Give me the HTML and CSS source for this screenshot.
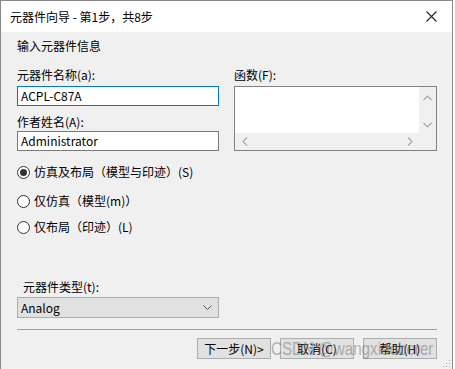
FILE: index.html
```html
<!DOCTYPE html>
<html lang="zh-CN">
<head>
<meta charset="UTF-8">
<title>元器件向导</title>
<link rel="stylesheet" href="styles.css">
</head>
<body>
<div class="window">
    <div class="titlebar">
        <span class="title">元器件向导 - 第1步，共8步</span>
        <svg class="close" width="11" height="11" viewBox="0 0 11 11">
            <path d="M0.5 0.5 L10.5 10.5 M10.5 0.5 L0.5 10.5" stroke="#222" stroke-width="1.1" fill="none"/>
        </svg>
    </div>
    <div class="content">
        <div class="heading">输入元器件信息</div>

        <div class="fields">
            <div class="col">
                <label class="lbl">元器件名称(a):</label>
                <div class="input focused">ACPL-C87A</div>
                <label class="lbl second">作者姓名(A):</label>
                <div class="input">Administrator</div>
            </div>
            <div class="col">
                <label class="lbl">函数(F):</label>
                <div class="listbox">
                    <div class="list-main">
                        <div class="list-white"></div>
                        <div class="vscroll">
                            <svg width="9" height="6" viewBox="0 0 9 6"><path d="M0.5 5 L4.5 1 L8.5 5" stroke="#a6a6a6" stroke-width="1.2" fill="none"/></svg>
                            <svg width="9" height="6" viewBox="0 0 9 6"><path d="M0.5 1 L4.5 5 L8.5 1" stroke="#a6a6a6" stroke-width="1.2" fill="none"/></svg>
                        </div>
                    </div>
                    <div class="hscroll">
                        <svg width="6" height="9" viewBox="0 0 6 9"><path d="M5 0.5 L1 4.5 L5 8.5" stroke="#a6a6a6" stroke-width="1.2" fill="none"/></svg>
                        <svg width="6" height="9" viewBox="0 0 6 9"><path d="M1 0.5 L5 4.5 L1 8.5" stroke="#a6a6a6" stroke-width="1.2" fill="none"/></svg>
                        <span class="corner"></span>
                    </div>
                </div>
            </div>
        </div>

        <div class="radios">
            <div class="radio-row"><span class="radio checked"></span>仿真及布局（模型与印迹）(S)</div>
            <div class="radio-row r2"><span class="radio"></span>仅仿真（模型(m)）</div>
            <div class="radio-row r3"><span class="radio"></span>仅布局（印迹）(L)</div>
        </div>

        <div class="type-label">元器件类型(t):</div>
        <div class="select">
            <span>Analog</span>
            <svg width="9" height="5" viewBox="0 0 9 5"><path d="M0.5 0.5 L4.5 4.5 L8.5 0.5" stroke="#555" stroke-width="1" fill="none"/></svg>
        </div>

        <div class="separator"></div>

        <div class="buttons">
            <div class="btn">下一步(N)&gt;</div>
            <div class="btn">取消(C)</div>
            <div class="btn">帮助(H)</div>
        </div>
        <div class="watermark">CSDN @wangxiaoberer</div>
        <svg class="grip" width="8" height="8" viewBox="0 0 8 8">
            <rect x="6" y="0" width="1" height="1" fill="#aaa"/>
            <rect x="3" y="3" width="1" height="1" fill="#aaa"/>
            <rect x="6" y="3" width="1" height="1" fill="#aaa"/>
            <rect x="0" y="6" width="1" height="1" fill="#aaa"/>
            <rect x="3" y="6" width="1" height="1" fill="#aaa"/>
            <rect x="6" y="6" width="1" height="1" fill="#aaa"/>
        </svg>
    </div>
</div>
</body>
</html>
```

FILE: styles.css
```css
body {
    margin: 0;
    padding: 0;
    background-color: #fff;
    font-family: "Noto Sans CJK SC", "Noto Sans", sans-serif;
    font-size: 12px;
    color: #000;
}
.window {
    width: 453px;
    height: 369px;
    box-sizing: border-box;
    border: 1px solid #8a8a8a;
    border-bottom: none;
    display: flex;
    flex-direction: column;
}
.titlebar {
    height: 31px;
    background-color: #fff;
    display: flex;
    align-items: center;
    justify-content: space-between;
    padding: 0 15px 0 9px;
    flex-shrink: 0;
}
.title {
    font-size: 12px;
    line-height: 16px;
}
.content {
    flex: 1;
    background-color: #f0f0f0;
    padding: 6px 15px 0 16px;
    position: relative;
}
.heading {
    line-height: 16px;
}
.fields {
    display: grid;
    grid-template-columns: 202px 203px;
    column-gap: 15px;
    margin-top: 13px;
}
.col {
    display: flex;
    flex-direction: column;
}
.lbl {
    line-height: 16px;
    margin-bottom: 3px;
}
.lbl.second {
    margin-top: 8px;
    margin-bottom: 1px;
}
.input {
    height: 20px;
    box-sizing: border-box;
    border: 1px solid #7a7a7a;
    background-color: #fff;
    padding: 0 3px;
    line-height: 18px;
}
.input.focused {
    border-color: #0078d7;
}
.listbox {
    height: 65px;
    box-sizing: border-box;
    border: 1px solid #828282;
    display: flex;
    flex-direction: column;
    background-color: #fff;
}
.list-main {
    flex: 1;
    display: flex;
}
.list-white {
    flex: 1;
}
.vscroll {
    width: 17px;
    background-color: #f0f0f0;
    display: flex;
    flex-direction: column;
    justify-content: space-between;
    align-items: center;
    padding: 8px 0 5px;
    box-sizing: border-box;
}
.hscroll {
    height: 17px;
    background-color: #f0f0f0;
    display: flex;
    align-items: center;
    padding-left: 7px;
}
.hscroll svg:nth-child(2) {
    margin-left: auto;
    margin-right: 6px;
}
.corner {
    width: 17px;
    height: 17px;
}
.radios {
    margin-top: 13px;
}
.radio-row {
    display: flex;
    align-items: center;
    line-height: 16px;
}
.radio-row.r2 {
    margin-top: 13px;
}
.radio-row.r3 {
    margin-top: 10px;
}
.radio {
    width: 13px;
    height: 13px;
    box-sizing: border-box;
    border: 1px solid #333;
    border-radius: 50%;
    background-color: #fff;
    margin-right: 4px;
    position: relative;
}
.radio.checked::after {
    content: "";
    position: absolute;
    left: 2px;
    top: 2px;
    width: 7px;
    height: 7px;
    border-radius: 50%;
    background-color: #333;
}
.type-label {
    margin-top: 44px;
    margin-left: 6px;
    line-height: 16px;
}
.select {
    width: 202px;
    height: 21px;
    box-sizing: border-box;
    margin-top: 2px;
    border: 1px solid #adadad;
    background-color: #e1e1e1;
    display: flex;
    align-items: center;
    justify-content: space-between;
    padding: 0 6px 0 3px;
}
.separator {
    margin-top: 11px;
    height: 1px;
    width: 420px;
    background-color: #a0a0a0;
}
.buttons {
    display: flex;
    justify-content: flex-end;
    gap: 9px;
    margin-top: 8px;
    width: 420px;
}
.btn {
    width: 74px;
    height: 21px;
    box-sizing: border-box;
    border: 1px solid #adadad;
    background-color: #e1e1e1;
    text-align: center;
    line-height: 19px;
}
.watermark {
    position: absolute;
    left: 270px;
    top: 306px;
    white-space: nowrap;
    font-family: "Liberation Sans", sans-serif;
    font-size: 19px;
    color: rgba(110, 110, 110, 0.5);
    transform: scaleX(0.8);
    transform-origin: left top;
}
.grip {
    position: absolute;
    right: 1px;
    bottom: 1px;
}
```
